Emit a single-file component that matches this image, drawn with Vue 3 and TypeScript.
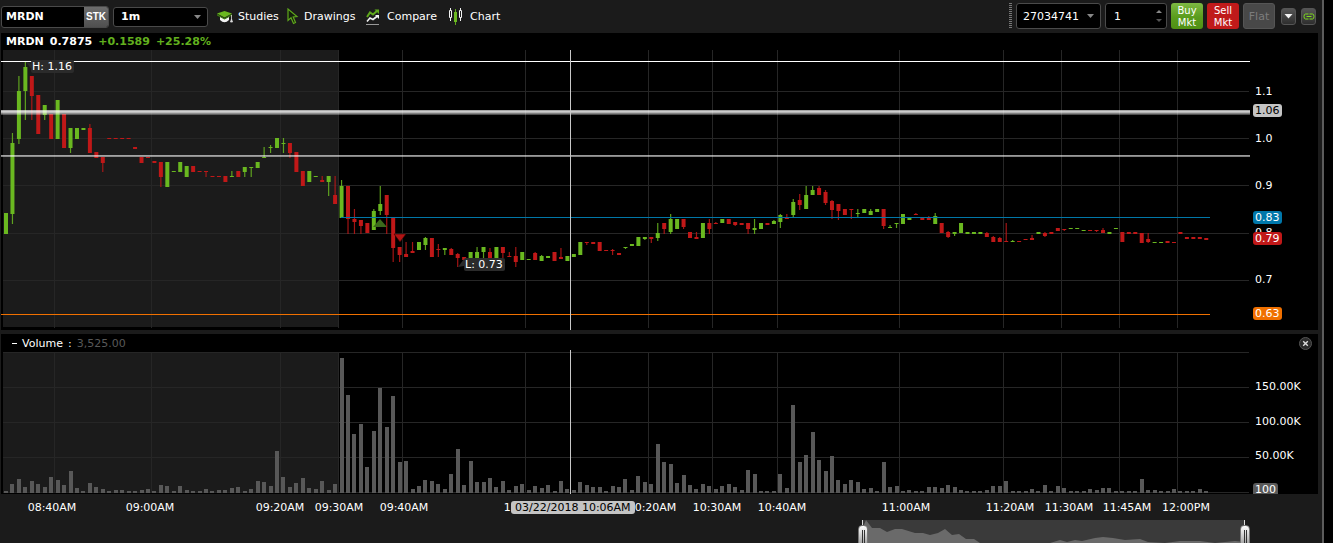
<script setup lang="ts">
import { computed, ref } from 'vue'

type Tick = { at: number; label: string }

const LEFT = 1
const PLOT_WIDTH = 1249
const FIRST_BAR = 6
const BAR_STEP = 6.453
const PRICE_TOP = 50
const VOLUME_TOP = 352
const VOLUME_BASE = 493

const symbol = ref('MRDN')
const interval = ref('1m')
const account = ref('27034741')
const quantity = ref('1')

const verticals = [54, 151, 280, 338, 402, 525, 648, 712, 777, 899, 1003, 1061, 1119, 1177]
const priceRows = [91, 138, 185, 233, 280]
const volumeRows = [352, 387, 422, 457, 492]

const priceTicks: Tick[] = [
  { at: 91, label: '1.1' },
  { at: 138, label: '1.0' },
  { at: 185, label: '0.9' },
  { at: 232, label: '0.8' },
  { at: 279, label: '0.7' },
]
const priceTags = [
  { at: 110, label: '1.06', kind: 'silver' },
  { at: 217, label: '0.83', kind: 'blue' },
  { at: 238, label: '0.79', kind: 'red' },
  { at: 313, label: '0.63', kind: 'orange' },
]
const volumeTicks: Tick[] = [
  { at: 386, label: '150.00K' },
  { at: 421, label: '100.00K' },
  { at: 455, label: '50.00K' },
]
const timeTicks: Tick[] = [
  { at: 52, label: '08:40AM' },
  { at: 150, label: '09:00AM' },
  { at: 280, label: '09:20AM' },
  { at: 339, label: '09:30AM' },
  { at: 404, label: '09:40AM' },
  { at: 528, label: '10:00AM' },
  { at: 652, label: '10:20AM' },
  { at: 717, label: '10:30AM' },
  { at: 782, label: '10:40AM' },
  { at: 906, label: '11:00AM' },
  { at: 1010, label: '11:20AM' },
  { at: 1069, label: '11:30AM' },
  { at: 1127, label: '11:45AM' },
  { at: 1186, label: '12:00PM' },
]

/* One entry per minute: direction, high, body top, body bottom, low */
const series = `
g213,213,234,234 g133,143,214,224 g76,91,139,144 g62,67,91,120 r76,76,96,120 r95,95,134,134
g105,105,115,120 r114,114,139,139 g100,100,139,139 r114,114,148,148 g128,128,148,153 g128,128,139,139
g128,128,130,130 r124,128,153,153 r152,152,158,158 r157,157,163,172 r138,138,139,139 r138,138,139,139
r138,138,139,139 r138,138,139,139 r147,147,149,149 r157,157,163,163 r157,157,158,158 r161,161,163,163
r162,162,177,187 g162,162,187,187 g171,171,172,172 g162,162,172,172 g166,166,177,177 r166,166,172,172
r171,171,172,172 r171,171,172,177 r176,176,177,177 r176,176,177,177 r176,176,182,182 g171,176,177,177
r171,171,177,177 g167,167,172,177 g167,167,168,177 g162,162,168,168 g147,157,158,158 g145,147,148,153
g138,138,148,148 g138,143,144,153 r143,143,153,158 r152,152,172,172 r171,171,186,186 g171,171,182,182
g176,176,177,177 r176,180,182,182 g176,176,182,196 r176,195,204,204 g180,186,218,218 r186,186,219,234
r209,219,222,234 r220,220,226,234 r223,223,233,233 g209,211,230,230 g186,204,211,215 r195,195,215,234
r218,218,248,262 r247,247,255,262 r242,254,257,257 r242,251,253,253 g242,242,250,250 g237,238,245,250
r238,238,257,257 r244,249,250,257 g248,248,250,255 r248,249,255,255 r253,254,258,267 r257,257,260,260
g252,252,258,258 g247,252,258,258 g247,247,252,258 r248,252,258,258 g247,247,258,258 r247,247,253,258
r252,256,257,257 r247,256,262,267 g252,252,260,260 g259,259,260,260 r252,253,260,260 g255,256,261,261
g256,256,258,258 r252,252,261,261 r248,257,259,259 g256,256,261,261 g254,254,257,257 g242,242,255,255
r242,242,243,245 r242,242,244,244 r242,242,251,251 r250,250,251,251 r249,250,251,255 r253,253,255,255
g247,247,248,249 g244,244,246,246 g237,237,246,246 g237,237,239,240 r237,237,239,243 g223,233,238,241
r223,223,229,234 g214,219,232,234 g219,219,229,229 r219,219,227,229 r232,232,238,238 r232,237,239,239
g223,223,238,238 r219,223,229,234 r222,223,224,224 g219,219,223,223 r219,219,224,224 r222,222,225,226
r223,223,225,225 r223,223,229,234 g219,228,230,234 g223,223,229,229 r223,223,225,225 g220,221,224,224
g214,215,222,228 r214,217,219,219 g199,202,215,217 r194,200,205,210 g186,195,209,209 g186,190,195,195
r186,188,195,195 r190,192,203,205 r200,201,210,219 r204,204,211,220 r209,209,215,215 r209,209,210,219
g209,213,214,217 g209,209,213,213 g209,211,215,215 g209,209,212,212 r209,209,226,229 g225,227,228,228
g223,223,224,228 g214,214,224,224 g218,218,220,220 r213,214,215,215 r218,218,220,220 r216,218,220,220
g213,216,224,224 r223,223,233,233 r231,232,237,238 g232,232,234,236 g223,223,233,233 g232,232,234,234
g232,232,234,234 g232,232,234,234 r232,233,237,237 r236,237,242,242 r237,238,242,242 r223,241,242,242
g240,241,242,242 r241,241,242,242 r239,239,240,240 r235,238,240,240 g232,232,234,234 r232,233,236,237
r232,232,234,234 r228,228,231,231 r229,229,230,231 g228,228,229,229 g228,228,229,229 g230,230,231,231
r230,230,231,231 r230,230,231,232 r228,230,233,233 g232,232,234,234 g228,228,229,229 r232,232,242,242
r232,232,234,234 r232,232,234,234 r233,233,243,243 r233,239,242,243 g242,242,243,243 g242,242,243,243
r241,241,243,243 r242,242,243,243 r232,232,234,234 r237,237,239,239 r237,237,239,239 r237,237,239,239
r238,238,240,240`

const candles = series
  .trim()
  .split(/\s+/)
  .map((entry, index) => {
    const [high, top, bottom, low] = entry.slice(1).split(',').map(Number)
    return { x: FIRST_BAR + index * BAR_STEP, up: entry[0] === 'g', high, top, bottom, low }
  })

const volumes = [
  2, 9, 14, 6, 12, 9, 6, 16, 13, 8, 22, 5, 2, 10, 6, 4, 2, 3, 3, 2, 2, 3, 4, 2, 8, 7, 2, 7, 3, 2, 2, 4, 2, 3, 3, 5, 6,
  2, 4, 12, 11, 7, 42, 16, 6, 10, 15, 5, 4, 12, 3, 9, 135, 98, 59, 69, 26, 62, 105, 66, 97, 31, 32, 4, 7, 13, 12, 9, 4,
  19, 44, 8, 32, 11, 11, 15, 6, 12, 3, 7, 9, 3, 7, 5, 8, 2, 12, 4, 3, 11, 8, 6, 6, 2, 7, 6, 14, 3, 17, 11, 9, 49, 31,
  29, 10, 18, 8, 4, 9, 7, 4, 7, 9, 6, 3, 23, 19, 2, 2, 2, 19, 5, 88, 31, 38, 61, 33, 22, 37, 13, 9, 13, 11, 4, 5, 2,
  31, 6, 7, 2, 3, 2, 2, 6, 6, 5, 8, 6, 3, 2, 2, 2, 3, 7, 7, 12, 2, 2, 2, 4, 2, 8, 2, 7, 5, 2, 2, 2, 4, 3, 5, 5, 2, 2,
  2, 2, 14, 3, 3, 2, 2, 4, 2, 2, 2, 4, 2,
]

const volumeBars = computed(() =>
  volumes.map((height, index) => ({
    x: Math.round(FIRST_BAR + index * BAR_STEP) - 2,
    y: VOLUME_BASE - height,
    height,
  })),
)

const overview =
  '863,543 863,527 866,520 872,528 880,528 887,532 895,529 902,529 915,533 923,533 930,535 938,533 945,529 952,535 959,534 966,539 974,539 980,543 1050,543 1060,540 1067,542 1075,540 1082,541 1095,538 1103,537 1113,538 1125,540 1140,539 1148,542 1165,543 1180,541 1200,541 1215,543 1235,541 1245,542 1245,543'

const across = (x: number) => `${((x - LEFT) / PLOT_WIDTH) * 100}%`
const down = (y: number, top: number) => `${y - top}px`
</script>

<template>
  <div class="window">
    <main class="app">
      <header class="toolbar">
        <div class="symbol-box">
          <input v-model="symbol" class="symbol-input" aria-label="Symbol" />
          <button class="stk" type="button">STK</button>
        </div>
        <label class="combo interval">
          <select v-model="interval" aria-label="Interval">
            <option>1m</option>
            <option>5m</option>
          </select>
          <svg class="caret" viewBox="0 0 7 4"><path d="M0 0H7L3.5 4Z" /></svg>
        </label>
        <nav class="tools">
          <button class="tool" type="button">
            <svg width="16" height="16" viewBox="0 0 16 16">
              <path d="M3 7.500V11Q7.500 15.500 12 11V7.500L7.500 10Z" fill="#f2f2f2" />
              <path d="M0 4.500L7.500 2L15 4.500L7.500 8.500Z" fill="#6ab820" />
              <path d="M0 5L7.500 9.200L15 5V6.500L7.500 10.500L0 6.500Z" fill="#3c7a10" />
              <path d="M14.500 6V10.500M14.500 10L13.500 13H15.500Z" fill="#ddd" stroke="#ddd" stroke-width=".8" />
            </svg>
            Studies
          </button>
          <button class="tool" type="button">
            <svg width="12" height="17" viewBox="0 0 12 17">
              <path d="M1 1V12.500L4 9.800L6.500 15.500L8.500 14.500L6.200 9L10 8.500Z" fill="#14200c" stroke="#5fa81c" stroke-width="1.200" />
            </svg>
            Drawings
          </button>
          <button class="tool" type="button">
            <svg width="16" height="16" viewBox="0 0 16 16">
              <path d="M1 8L4 3.500L7 5.500L11.500 1.500" fill="none" stroke="#5fa81c" stroke-width="2" />
              <path d="M8.500 0.500H13V5Z" fill="#5fa81c" />
              <path d="M1 12.500L4 9L7 10.500L11.500 7" fill="none" stroke="#f2f2f2" stroke-width="1.600" />
              <path d="M9 6H13V10Z" fill="#f2f2f2" />
              <path d="M0 15.500H13" stroke="#999" />
            </svg>
            Compare
          </button>
          <button class="tool" type="button">
            <svg width="16" height="17" viewBox="0 0 16 17">
              <path d="M1.500 0V13M11.500 0V13" stroke="#eee" />
              <path d="M0.500 2.500H2.500V9.500H0.500ZM10.500 2.500H12.500V9.500H10.500Z" fill="#1b1b1b" stroke="#f2f2f2" />
              <path d="M6.500 1V17" stroke="#5fa81c" />
              <rect x="5" y="4" width="3" height="10" fill="#6ab820" />
            </svg>
            Chart
          </button>
        </nav>
        <div class="orders">
          <span class="grip"></span>
          <label class="combo account">
            <select v-model="account" aria-label="Account">
              <option>27034741</option>
            </select>
            <svg class="caret" viewBox="0 0 7 4"><path d="M0 0H7L3.5 4Z" /></svg>
          </label>
          <div class="spinner">
            <input v-model="quantity" aria-label="Quantity" inputmode="numeric" />
            <svg width="6" height="14" viewBox="0 0 6 14">
              <path d="M0 4L3 1L6 4Z" fill="#888" />
              <path d="M0 10H6L3 13Z" fill="#555" />
            </svg>
          </div>
          <button class="order buy" type="button">Buy<br />Mkt</button>
          <button class="order sell" type="button">Sell<br />Mkt</button>
          <button class="order flat" type="button" disabled>Flat</button>
          <button class="mini" type="button" aria-label="More">
            <svg width="9" height="5" viewBox="0 0 9 5"><path d="M0.500 0H8.500L4.500 4.500Z" fill="#f2f2f2" /></svg>
          </button>
          <button class="mini" type="button" aria-label="Link">
            <svg width="12" height="7" viewBox="0 0 12 7" fill="none" stroke="#7fdc1e">
              <path d="M5.500 1H2.500Q1 1 1 3.500T2.500 6H5.500M6.500 1H9.500Q11 1 11 3.500T9.500 6H6.500M3.500 3.500H8.500" />
            </svg>
          </button>
        </div>
      </header>

      <div class="quote">
        <span>MRDN</span>
        <span>0.7875</span>
        <span class="gain">+0.1589</span>
        <span class="gain">+25.28%</span>
      </div>

      <section class="panel price">
        <div class="plot">
          <svg viewBox="1 50 1249 280" preserveAspectRatio="none">
            <g shape-rendering="crispEdges">
              <rect x="3" y="50" width="336" height="277" fill="#1b1b1b" />
              <rect v-for="x in verticals" :key="x" :x="x" y="50" width="1" height="278" fill="#262626" />
              <rect v-for="y in priceRows" :key="y" x="3" :y="y" width="1246" height="1" fill="#262626" />
            </g>
            <g v-for="(c, i) in candles" :key="i" :fill="c.up ? '#6ab820' : '#c01818'">
              <rect v-if="c.low - c.high > c.bottom - c.top" :x="c.x - 0.6" :y="c.high" width="1.2" :height="c.low - c.high" opacity=".85" />
              <rect :x="c.x - 2" :y="c.top" width="4" :height="c.bottom - c.top" />
            </g>
            <g shape-rendering="crispEdges">
              <rect x="1" y="61" width="1249" height="1" fill="#fff" />
              <g fill="#fff">
                <rect x="1" y="110" width="1249" height="1" opacity=".65" />
                <rect x="1" y="111" width="1249" height="1" opacity=".8" />
                <rect x="1" y="112" width="1249" height="1" opacity=".7" />
                <rect x="1" y="113" width="1249" height="1" opacity=".5" />
                <rect x="1" y="114" width="1249" height="1" opacity=".3" />
                <rect x="1" y="155" width="1249" height="1" opacity=".6" />
                <rect x="1" y="156" width="1249" height="1" opacity=".5" />
              </g>
              <rect x="341" y="217" width="869" height="1" fill="#0077a8" />
              <rect x="1" y="314" width="1209" height="1" fill="#f07000" />
            </g>
            <path d="M373 227L380 219L387 227Z" fill="#3c6a1c" />
            <path d="M394 234H406L400 242Z" fill="#b01414" stroke="#300" stroke-width=".6" />
            <path d="M26 62L32 64V70Z M458 267L464 259V266Z" fill="#2b2b2b" />
            <rect x="570" y="50" width="1" height="280" fill="#c8c8c8" shape-rendering="crispEdges" />
          </svg>
          <span class="note" :style="{ left: across(31), top: down(60, PRICE_TOP) }">H: 1.16</span>
          <span class="note" :style="{ left: across(464), top: down(258, PRICE_TOP) }">L: 0.73</span>
        </div>
        <div class="scale">
          <span v-for="t in priceTicks" :key="t.label" class="tick" :style="{ top: down(t.at, PRICE_TOP) }">{{ t.label }}</span>
          <span v-for="t in priceTags" :key="t.label" class="tag" :class="t.kind" :style="{ top: down(t.at, PRICE_TOP) }">{{ t.label }}</span>
        </div>
      </section>

      <header class="study">
        <button class="fold" type="button" aria-label="Collapse"></button>
        <span>Volume</span>
        <span>:</span>
        <span class="value">3,525.00</span>
        <button class="close" type="button" aria-label="Close">
          <svg width="13" height="13" viewBox="0 0 13 13">
            <circle cx="6.500" cy="6.500" r="6" fill="#2b2b2b" stroke="#555" />
            <path d="M4.200 4.200L8.800 8.800M8.800 4.200L4.200 8.800" stroke="#ddd" stroke-width="1.400" />
          </svg>
        </button>
      </header>

      <section class="panel volume">
        <div class="plot">
          <svg viewBox="1 352 1249 142" preserveAspectRatio="none" shape-rendering="crispEdges">
            <rect x="3" y="352" width="336" height="141" fill="#1b1b1b" />
            <rect v-for="x in verticals" :key="x" :x="x" y="352" width="1" height="141" fill="#262626" />
            <rect v-for="y in volumeRows" :key="y" x="3" :y="y" width="1246" height="1" fill="#262626" />
            <rect v-for="(b, i) in volumeBars" :key="i" :x="b.x" :y="b.y" width="4" :height="b.height" fill="#585858" />
            <rect x="570" y="350" width="1" height="144" fill="#c8c8c8" />
          </svg>
        </div>
        <div class="scale">
          <span v-for="t in volumeTicks" :key="t.label" class="tick" :style="{ top: down(t.at, VOLUME_TOP) }">{{ t.label }}</span>
          <span class="tag gray" :style="{ top: down(489, VOLUME_TOP) }">100</span>
        </div>
      </section>

      <div class="timeline">
        <div class="times">
          <span v-for="t in timeTicks" :key="t.label" class="time" :style="{ left: across(t.at) }">{{ t.label }}</span>
          <span class="cursor-time" :style="{ left: across(511) }">03/22/2018 10:06AM</span>
        </div>
      </div>

      <div class="overview">
        <div class="range">
          <svg viewBox="1 520 1249 23" preserveAspectRatio="none">
            <rect x="862" y="520" width="383" height="23" fill="#3a3a3a" />
            <polygon :points="overview" fill="#6a6a6a" />
            <path d="M862.500 520V526M1244.500 520V526" stroke="#ddd" />
          </svg>
          <button class="handle" type="button" aria-label="Range start" :style="{ left: across(862) }"></button>
          <button class="handle" type="button" aria-label="Range end" :style="{ left: across(1244) }"></button>
        </div>
      </div>
    </main>
    <aside class="edge"></aside>
  </div>
</template>

<style>
body {
  margin: 0;
  background: #000;
}
</style>

<style scoped>
.window {
  display: flex;
  overflow: hidden;
  background: #1b1b1b;
  color: #fff;
  font: 11px/13px "DejaVu Sans", Verdana, sans-serif;
}
.window * {
  box-sizing: border-box;
}
.app {
  flex: 1;
  min-width: 0;
  padding: 0 4px 0 1px;
}
.edge {
  width: 11px;
  border-left: 2px solid #5c5c5c;
  background: #000;
}
button,
input,
select {
  margin: 0;
  padding: 0;
  border: 0;
  border-radius: 0;
  background: none;
  color: inherit;
  font: inherit;
  outline: none;
}
select {
  appearance: none;
}
.toolbar {
  display: flex;
  align-items: center;
  height: 33px;
  padding: 0 2px 0 0;
}
.symbol-box {
  display: flex;
  width: 108px;
  height: 22px;
  overflow: hidden;
  border: 1px solid #4a4a4a;
  border-radius: 3px;
  background: #000;
}
.symbol-input {
  flex: 1;
  min-width: 0;
  padding-left: 4px;
  font-weight: bold;
}
.stk {
  width: 24px;
  background: linear-gradient(#6c6c6c, #505050);
  font: bold 10px/20px "Liberation Sans", Arial, sans-serif;
}
.combo {
  display: flex;
  align-items: center;
  border: 1px solid #4a4a4a;
  border-radius: 3px;
  background: #000;
}
.combo select {
  flex: 1;
  min-width: 0;
}
.caret {
  width: 7px;
  height: 4px;
  fill: #888;
}
.interval {
  width: 95px;
  height: 20px;
  margin-left: 4px;
  padding: 0 6px 0 7px;
  font-weight: bold;
}
.tools {
  display: grid;
  grid-template-columns: 70px 79px 83px auto;
  margin-left: 9px;
}
.tool {
  display: flex;
  align-items: center;
  gap: 5px;
}
.orders {
  display: flex;
  align-items: center;
  gap: 4px;
  height: 26px;
  margin-left: auto;
  padding-bottom: 1px;
}
.grip {
  width: 3px;
  height: 26px;
  background: repeating-linear-gradient(#777 0 1px, #1b1b1b 1px 2px);
}
.account {
  width: 85px;
  height: 26px;
  padding: 0 6px;
}
.spinner {
  display: flex;
  align-items: center;
  width: 62px;
  height: 26px;
  padding: 0 4px 0 8px;
  border: 1px solid #4a4a4a;
  border-radius: 3px;
  background: #000;
}
.spinner input {
  flex: 1;
  min-width: 0;
}
.order {
  width: 32px;
  height: 26px;
  padding-top: 2px;
  border-radius: 3px;
  font-size: 10px;
  line-height: 12px;
}
.buy {
  background: linear-gradient(#7db843, #5a9c1c 55%, #4f9014);
}
.sell {
  background: #c01a1a;
}
.flat {
  border: 1px solid #555;
  background: #484848;
  color: #7c7c7c;
  font-size: 11px;
}
.mini {
  display: flex;
  align-items: center;
  justify-content: center;
  width: 15px;
  height: 17px;
  border: 1px solid #555;
  border-radius: 3px;
  background: linear-gradient(#555, #2e2e2e);
}
.flat + .mini {
  margin: 0 1px 0 2px;
}
.quote {
  display: flex;
  gap: 6px;
  height: 17px;
  padding-left: 5px;
  background: #000;
  font-weight: bold;
  line-height: 17px;
}
.gain {
  color: #62b01e;
}
.panel {
  display: grid;
  grid-template-columns: minmax(0, 1fr) 68px;
  background: #000;
}
.price {
  height: 280px;
}
.volume {
  height: 142px;
}
.plot,
.scale,
.times,
.range {
  position: relative;
}
.plot svg,
.range svg {
  display: block;
  width: 100%;
  height: 100%;
}
.plot svg {
  overflow: visible;
}
.note {
  position: absolute;
  padding: 0 2px 0 1px;
  border-radius: 2px;
  background: #2b2b2b;
}
.tick,
.tag {
  position: absolute;
  left: 3px;
  margin-top: -6px;
  padding: 0 2px;
}
.tag {
  border-radius: 3px;
}
.silver {
  background: #c4c4c4;
  color: #000;
}
.blue {
  background: #0077aa;
}
.red {
  background: #c01818;
}
.orange {
  background: #f07000;
}
.gray {
  height: 11px;
  border-radius: 3px 3px 0 0;
  background: #5a5a5a;
}
.study {
  display: flex;
  align-items: center;
  gap: 5px;
  height: 22px;
  padding: 0 6px 0 11px;
  border-top: 4px solid #1b1b1b;
  background: #000;
}
.fold {
  width: 5px;
  height: 1px;
  background: #fff;
}
.value {
  color: #585858;
}
.close {
  height: 13px;
  margin-left: auto;
}
.close svg {
  display: block;
}
.timeline {
  height: 26px;
  padding-right: 68px;
}
.time {
  position: absolute;
  top: 7px;
  width: 60px;
  margin-left: -30px;
  text-align: center;
}
.cursor-time {
  position: absolute;
  top: 7px;
  padding: 0 4px;
  border-radius: 3px;
  background: #c4c4c4;
  color: #000;
  white-space: nowrap;
}
.overview {
  padding-right: 68px;
}
.range {
  height: 23px;
  overflow: hidden;
}
.handle {
  position: absolute;
  top: 5px;
  width: 10px;
  height: 22px;
  margin-left: -4px;
  border: 1px solid #777;
  border-radius: 4px;
  background:
    linear-gradient(#333, #333) 3px 4px / 1px 20px no-repeat,
    linear-gradient(#333, #333) 5px 4px / 1px 20px no-repeat,
    linear-gradient(#fff, #999);
}
</style>
